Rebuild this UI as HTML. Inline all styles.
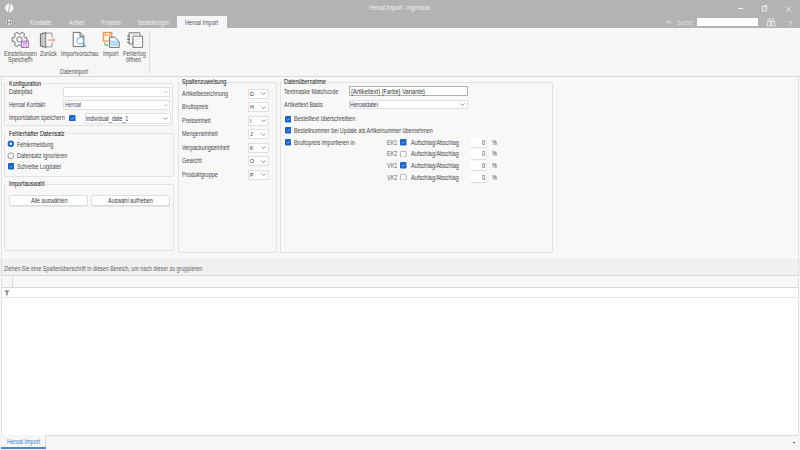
<!DOCTYPE html>
<html><head><meta charset="utf-8"><style>
html,body{margin:0;padding:0;}
body{width:800px;height:450px;overflow:hidden;position:relative;background:#f8f8f8;font-family:"Liberation Sans",sans-serif;}
body>div,body>svg{position:absolute;}
.t{white-space:nowrap;transform-origin:0 0;-webkit-text-stroke:0px currentColor;}
</style></head><body>
<div style="left:0px;top:0px;width:800px;height:28px;background:#b3b3b3"></div>
<svg style="left:4px;top:3.4px" width="11" height="11" viewBox="0 0 11 11"><circle cx="5.2" cy="5" r="4.2" fill="#f4f4f4"/><path d="M6 1 L4.4 9" stroke="#b3b3b3" stroke-width="1.1"/></svg>
<div class="t" style="left:369px;top:5.00px;color:#f2f2f2;font-size:6.3px;line-height:6.3px;transform:scaleX(0.865);">Heroal Import - ingenious</div>
<div style="left:738px;top:8px;width:5px;height:1px;background:#f2f2f2"></div>
<svg style="left:761px;top:4px" width="8" height="8" viewBox="0 0 8 8"><rect x="1.5" y="2.5" width="3.6" height="4.6" fill="none" stroke="#f0f0f0" stroke-width="0.95"/><path d="M3 1.5 H5.9 V6" fill="none" stroke="#e6e6e6" stroke-width="0.7"/></svg>
<svg style="left:785px;top:6px" width="7" height="6" viewBox="0 0 7 6"><path d="M1 0.5 L6 5.5 M6 0.5 L1 5.5" stroke="#f2f2f2" stroke-width="0.9"/></svg>
<svg style="left:5px;top:18px" width="12" height="9" viewBox="0 0 12 9"><rect x="0.9" y="1.2" width="6.6" height="6.4" fill="#ececec" stroke="#9a9a9a" stroke-width="0.7"/><path d="M2.6 1.8 V7 M5.8 1.8 V7 M2.6 4.4 H5.8" stroke="#6e6e6e" stroke-width="0.8"/><path d="M9.3 4.6 L9.9 5.1 L10.5 4.6" stroke="#8a8a8a" stroke-width="0.5" fill="none"/></svg>
<div class="t" style="left:30px;top:20.00px;color:#f0f0f0;font-size:6.3px;line-height:6.3px;transform:scaleX(0.865);">Kontakte</div>
<div class="t" style="left:68.5px;top:20.00px;color:#f0f0f0;font-size:6.3px;line-height:6.3px;transform:scaleX(0.865);">Artikel</div>
<div class="t" style="left:101px;top:20.00px;color:#f0f0f0;font-size:6.3px;line-height:6.3px;transform:scaleX(0.865);">Projekte</div>
<div class="t" style="left:137.5px;top:20.00px;color:#f0f0f0;font-size:6.3px;line-height:6.3px;transform:scaleX(0.865);">Bestellungen</div>
<div style="left:177px;top:16px;width:50px;height:12px;background:#f6f6f6"></div>
<div class="t" style="left:185px;top:20.00px;color:#4d526a;font-size:6.3px;line-height:6.3px;transform:scaleX(0.865);">Heroal Import</div>
<svg style="left:665px;top:20px" width="7" height="4" viewBox="0 0 7 4"><path d="M1 3.3 L3.5 1 L6 3.3" stroke="#f2f2f2" stroke-width="1" fill="none"/></svg>
<div class="t" style="left:677px;top:20.00px;color:#e2e2e2;font-size:6.3px;line-height:6.3px;transform:scaleX(0.865);">Suche:</div>
<div style="left:697px;top:17.5px;width:61px;height:8.5px;background:#ffffff"></div>
<svg style="left:766px;top:17px" width="10" height="10" viewBox="0 0 10 10"><path d="M2.6 1.5 H4 V4.6 M6 4.6 V1.5 H7.4" stroke="#eeeeee" stroke-width="0.8" fill="none"/><path d="M1.6 4.4 L2.6 1.8 M8.4 4.4 L7.4 1.8" stroke="#e4e4e4" stroke-width="0.7"/><rect x="1.3" y="4.6" width="3.2" height="4.3" fill="none" stroke="#eeeeee" stroke-width="0.8"/><rect x="5.5" y="4.6" width="3.2" height="4.3" fill="none" stroke="#eeeeee" stroke-width="0.8"/><path d="M4.5 5.2 H5.5" stroke="#eeeeee" stroke-width="0.8"/></svg>
<div class="t" style="left:788.2px;top:20.00px;color:#f2f2f2;font-size:8px;line-height:8px;transform:scaleX(0.9);">?</div>
<div style="left:0px;top:28px;width:800px;height:48px;background:#f6f6f6"></div>
<div style="left:0px;top:76px;width:800px;height:1px;background:#d9d9d9"></div>
<div style="left:149px;top:30px;width:1px;height:43px;background:#dedede"></div>
<div class="t" style="left:3.5px;top:51.00px;color:#525252;font-size:6.3px;line-height:6.3px;transform:scaleX(0.865);">Einstellungen</div>
<div class="t" style="left:7.5px;top:57.00px;color:#525252;font-size:6.3px;line-height:6.3px;transform:scaleX(0.865);">Speichern</div>
<div class="t" style="left:40px;top:51.00px;color:#525252;font-size:6.3px;line-height:6.3px;transform:scaleX(0.865);">Zurück</div>
<div class="t" style="left:60.5px;top:51.00px;color:#525252;font-size:6.3px;line-height:6.3px;transform:scaleX(0.865);">Importvorschau</div>
<div class="t" style="left:103px;top:51.00px;color:#525252;font-size:6.3px;line-height:6.3px;transform:scaleX(0.865);">Import</div>
<div class="t" style="left:123px;top:51.00px;color:#525252;font-size:6.3px;line-height:6.3px;transform:scaleX(0.865);">Fehlerlog</div>
<div class="t" style="left:126px;top:57.00px;color:#525252;font-size:6.3px;line-height:6.3px;transform:scaleX(0.865);">öffnen</div>
<div class="t" style="left:60px;top:69.00px;color:#525252;font-size:6.3px;line-height:6.3px;transform:scaleX(0.865);">Dateninport</div>
<svg style="left:10.5px;top:31px" width="20" height="18" viewBox="0 0 20 18"><path d="M13.79 10.32 L15.91 10.21 L15.91 6.79 L13.79 6.68 L12.73 4.83 L13.68 2.94 L10.72 1.23 L9.57 3.00 L7.43 3.00 L6.28 1.23 L3.32 2.94 L4.27 4.83 L3.21 6.68 L1.09 6.79 L1.09 10.21 L3.21 10.32 L4.27 12.17 L3.32 14.06 L6.28 15.77 L7.43 14.00 L9.57 14.00 L10.72 15.77 L13.68 14.06 L12.73 12.17 Z" fill="#f7f7f7" stroke="#5c5c5c" stroke-width="0.85" stroke-linejoin="round"/><circle cx="8.5" cy="8.5" r="2.7" fill="none" stroke="#5c5c5c" stroke-width="0.85"/><rect x="10.4" y="10.2" width="7" height="6.3" fill="#ffffff" stroke="#a65cbf" stroke-width="0.9"/><rect x="11.2" y="11.4" width="5.4" height="1.3" fill="#b77ccb"/><path d="M12.2 14 V16.2 M15.6 14 V16.2 M12.2 14 H15.6" stroke="#a65cbf" stroke-width="0.7" fill="none"/></svg>
<svg style="left:39px;top:31px" width="18" height="18" viewBox="0 0 18 18"><path d="M1.4 3 L7 1.6 L7 16.4 L1.4 15 Z" fill="#c8c8c8" stroke="#5a5a5a" stroke-width="0.9" stroke-linejoin="round"/><path d="M7 2.2 H12.8 V6.5 M12.8 11.5 V15.8 H7" fill="#ffffff" stroke="#5a5a5a" stroke-width="0.9"/><rect x="7.4" y="2.6" width="5" height="12.8" fill="#ffffff"/><path d="M8.8 9 H15.5 M13.5 7 L15.6 9 L13.5 11" stroke="#ef6b6b" stroke-width="0.9" fill="none"/></svg>
<svg style="left:72px;top:31px" width="16" height="18" viewBox="0 0 16 18"><path d="M1.2 1.4 H8 L11.8 5.2 V15.6 H1.2 Z" fill="#ffffff" stroke="#5a5a5a" stroke-width="0.9" stroke-linejoin="round"/><path d="M8 1.4 V5.2 H11.8" fill="#e0e0e0" stroke="#5a5a5a" stroke-width="0.9"/><circle cx="8.3" cy="9.7" r="3.4" fill="#ffffff" stroke="#4aa3df" stroke-width="0.9"/><path d="M10.7 12.2 L14 15.6" stroke="#4aa3df" stroke-width="1.1"/></svg>
<svg style="left:102px;top:31px" width="20" height="18" viewBox="0 0 20 18"><rect x="1.2" y="1.4" width="8.6" height="8.6" fill="#fbe3cf" stroke="#ec8a3c" stroke-width="1"/><rect x="3.2" y="1.4" width="4.6" height="2.6" fill="#ffffff" stroke="#ec8a3c" stroke-width="0.8"/><rect x="3.6" y="5.6" width="3.8" height="3.2" fill="#ffffff"/><path d="M7.6 6.2 H12.6 L17.2 10.6 V16.4 H7.6 Z" fill="#ffffff" stroke="#5a5a5a" stroke-width="0.9" stroke-linejoin="round"/><rect x="8.6" y="9.6" width="7.6" height="5.2" fill="#a8d4f2"/><path d="M9.6 12 H15.2" stroke="#ffffff" stroke-width="0.5"/><path d="M2.8 11 V14.2 H5.4" stroke="#5cc26a" stroke-width="0.9" fill="none"/><path d="M5 13 L6.4 14.2 L5 15.4 Z" fill="#3eb150"/></svg>
<svg style="left:126px;top:31px" width="18" height="18" viewBox="0 0 18 18"><path d="M3 1.8 H14 V13 H3 Z" fill="#ffffff" stroke="#6a6a6a" stroke-width="0.9"/><path d="M4.8 3.5 H12" stroke="#c8c8c8" stroke-width="0.6"/><rect x="1.2" y="4.6" width="2.6" height="1.3" fill="#777"/><rect x="1.2" y="7.7" width="2.6" height="1.3" fill="#666"/><rect x="1.2" y="10.8" width="2.6" height="1.3" fill="#888"/><path d="M7 5.2 H16.6 V16.4 H7 Z" fill="#ffffff" stroke="#6a6a6a" stroke-width="0.9"/><path d="M9.2 8 H15 M9.2 10.6 H15 M9.2 13.2 H15" stroke="#c8c8c8" stroke-width="0.6"/><rect x="5.8" y="8" width="1.6" height="1.3" fill="#999"/><rect x="5.8" y="10.8" width="1.6" height="1.3" fill="#888"/></svg>
<div style="left:4px;top:83px;width:169px;height:43.3px;border:1px solid #e2e2e2;box-sizing:border-box;border-radius:1px"></div>
<div style="left:7.0px;top:82px;width:35.5px;height:3px;background:#f8f8f8"></div>
<div class="t" style="left:8.5px;top:81.00px;color:#202020;font-size:6.3px;line-height:6.3px;transform:scaleX(0.865);-webkit-text-stroke:0.05px #202020;">Konfiguration</div>
<div class="t" style="left:8.5px;top:89.00px;color:#454545;font-size:6.3px;line-height:6.3px;transform:scaleX(0.865);">Dateipfad</div>
<div style="left:63px;top:87px;width:107px;height:10px;background:#ffffff;border:1px solid #e0e0e0;box-sizing:border-box"></div>
<svg style="left:163.50px;top:90.80px" width="4" height="2.4" viewBox="0 0 4 2.4"><path d="M0.4 0.5 L2 1.9 L3.6 0.5" stroke="#bdbdbd" stroke-width="0.9" fill="none"/></svg>
<div class="t" style="left:8.5px;top:102.00px;color:#454545;font-size:6.3px;line-height:6.3px;transform:scaleX(0.865);">Heroal Kontakt</div>
<div style="left:63px;top:100px;width:107px;height:10px;background:#ffffff;border:1px solid #e0e0e0;box-sizing:border-box"></div>
<div class="t" style="left:64.6px;top:102.00px;color:#4a5068;font-size:6.3px;line-height:6.3px;transform:scaleX(0.865);">Heroal</div>
<svg style="left:163.50px;top:103.80px" width="4" height="2.4" viewBox="0 0 4 2.4"><path d="M0.4 0.5 L2 1.9 L3.6 0.5" stroke="#bdbdbd" stroke-width="0.9" fill="none"/></svg>
<div class="t" style="left:8.5px;top:115.00px;color:#454545;font-size:6.3px;line-height:6.3px;transform:scaleX(0.865);">Importdatum speichern</div>
<svg style="left:69px;top:114.5px" width="6.5" height="6.5" viewBox="0 0 7 7"><rect x="0" y="0" width="7" height="7" rx="1.3" fill="#1a63c2"/><path d="M1.8 3.6 L3 4.8 L5.3 2.2" stroke="#cfe0f5" stroke-width="0.6" fill="none"/></svg>
<div style="left:84.5px;top:113.2px;width:86px;height:10.5px;background:#ffffff;border:1px solid #e0e0e0;box-sizing:border-box"></div>
<div class="t" style="left:86.1px;top:116.00px;color:#2c3046;font-size:6.3px;line-height:6.3px;transform:scaleX(0.865);">individual_date_1</div>
<svg style="left:163.10px;top:117.05px" width="5" height="3" viewBox="0 0 5 3"><path d="M0.5 0.6 L2.5 2.4 L4.5 0.6" stroke="#555" stroke-width="0.6" fill="none"/></svg>
<div style="left:4px;top:133.3px;width:170px;height:43.5px;border:1px solid #e2e2e2;box-sizing:border-box;border-radius:1px"></div>
<div style="left:7.0px;top:132.3px;width:59px;height:3px;background:#f8f8f8"></div>
<div class="t" style="left:8.5px;top:131.00px;color:#202020;font-size:6.3px;line-height:6.3px;transform:scaleX(0.865);-webkit-text-stroke:0.05px #202020;">Fehlerhafter Datensatz</div>
<svg style="left:7px;top:140px" width="8" height="8" viewBox="0 0 8 8"><circle cx="3.8" cy="3.8" r="3.2" fill="#1a63c2"/><circle cx="3.8" cy="3.8" r="1.3" fill="#ffffff"/></svg>
<div class="t" style="left:16.5px;top:142.00px;color:#454545;font-size:6.3px;line-height:6.3px;transform:scaleX(0.865);">Fehlermeldung</div>
<svg style="left:7px;top:151.5px" width="8" height="8" viewBox="0 0 8 8"><circle cx="3.8" cy="3.8" r="2.95" fill="#fbfbfb" stroke="#858585" stroke-width="0.8"/></svg>
<div class="t" style="left:16.5px;top:153.00px;color:#454545;font-size:6.3px;line-height:6.3px;transform:scaleX(0.865);">Datensatz ignorieren</div>
<svg style="left:7.5px;top:163px" width="6.5" height="6.5" viewBox="0 0 7 7"><rect x="0" y="0" width="7" height="7" rx="1.3" fill="#1a63c2"/><path d="M1.8 3.6 L3 4.8 L5.3 2.2" stroke="#cfe0f5" stroke-width="0.6" fill="none"/></svg>
<div class="t" style="left:16.5px;top:164.00px;color:#454545;font-size:6.3px;line-height:6.3px;transform:scaleX(0.865);">Schreibe Logdatei</div>
<div style="left:4px;top:183.6px;width:170px;height:67.4px;border:1px solid #e2e2e2;box-sizing:border-box;border-radius:1px"></div>
<div style="left:7.199999999999999px;top:182.6px;width:38.3px;height:3px;background:#f8f8f8"></div>
<div class="t" style="left:8.7px;top:181.00px;color:#202020;font-size:6.3px;line-height:6.3px;transform:scaleX(0.865);-webkit-text-stroke:0.05px #202020;">Importauswahl</div>
<div style="left:9.3px;top:195px;width:78.7px;height:10.8px;background:#ffffff;border:1px solid #dcdcdc;box-sizing:border-box;border-radius:2.5px;box-shadow:0 0.5px 0 #d4d4d4"></div>
<div class="t" style="left:31px;top:198.00px;color:#383838;font-size:6.3px;line-height:6.3px;transform:scaleX(0.865);">Alle auswählen</div>
<div style="left:91px;top:195px;width:79px;height:10.8px;background:#ffffff;border:1px solid #dcdcdc;box-sizing:border-box;border-radius:2.5px;box-shadow:0 0.5px 0 #d4d4d4"></div>
<div class="t" style="left:107.5px;top:198.00px;color:#383838;font-size:6.3px;line-height:6.3px;transform:scaleX(0.865);">Auswahl aufheben</div>
<div style="left:178.3px;top:82.2px;width:98.5px;height:170.6px;border:1px solid #e2e2e2;box-sizing:border-box;border-radius:1px"></div>
<div style="left:180.3px;top:81.2px;width:45px;height:3px;background:#f8f8f8"></div>
<div class="t" style="left:181.8px;top:79.00px;color:#202020;font-size:6.3px;line-height:6.3px;transform:scaleX(0.865);-webkit-text-stroke:0.05px #202020;">Spaltenzuweisung</div>
<div class="t" style="left:182px;top:91.00px;color:#454545;font-size:6.3px;line-height:6.3px;transform:scaleX(0.865);">Artikelbezeichnung</div>
<div style="left:248px;top:88.5px;width:20.5px;height:10.2px;background:#ffffff;border:1px solid #e0e0e0;box-sizing:border-box"></div>
<div class="t" style="left:249.6px;top:91.00px;color:#2c3046;font-size:6.2px;line-height:6.2px;transform:scaleX(0.865);">D</div>
<svg style="left:261.10px;top:92.20px" width="5" height="3" viewBox="0 0 5 3"><path d="M0.5 0.6 L2.5 2.4 L4.5 0.6" stroke="#555" stroke-width="0.6" fill="none"/></svg>
<div class="t" style="left:182px;top:104.00px;color:#454545;font-size:6.3px;line-height:6.3px;transform:scaleX(0.865);">Bruttopreis</div>
<div style="left:248px;top:102.0px;width:20.5px;height:10.2px;background:#ffffff;border:1px solid #e0e0e0;box-sizing:border-box"></div>
<div class="t" style="left:249.6px;top:104.00px;color:#2c3046;font-size:6.2px;line-height:6.2px;transform:scaleX(0.865);">H</div>
<svg style="left:261.10px;top:105.70px" width="5" height="3" viewBox="0 0 5 3"><path d="M0.5 0.6 L2.5 2.4 L4.5 0.6" stroke="#555" stroke-width="0.6" fill="none"/></svg>
<div class="t" style="left:182px;top:118.00px;color:#454545;font-size:6.3px;line-height:6.3px;transform:scaleX(0.865);">Preiseinheit</div>
<div style="left:248px;top:115.5px;width:20.5px;height:10.2px;background:#ffffff;border:1px solid #e0e0e0;box-sizing:border-box"></div>
<div class="t" style="left:249.6px;top:118.00px;color:#2c3046;font-size:6.2px;line-height:6.2px;transform:scaleX(0.865);">I</div>
<svg style="left:261.10px;top:119.20px" width="5" height="3" viewBox="0 0 5 3"><path d="M0.5 0.6 L2.5 2.4 L4.5 0.6" stroke="#555" stroke-width="0.6" fill="none"/></svg>
<div class="t" style="left:182px;top:131.00px;color:#454545;font-size:6.3px;line-height:6.3px;transform:scaleX(0.865);">Mengeneinheit</div>
<div style="left:248px;top:129.0px;width:20.5px;height:10.2px;background:#ffffff;border:1px solid #e0e0e0;box-sizing:border-box"></div>
<div class="t" style="left:249.6px;top:131.00px;color:#2c3046;font-size:6.2px;line-height:6.2px;transform:scaleX(0.865);">J</div>
<svg style="left:261.10px;top:132.70px" width="5" height="3" viewBox="0 0 5 3"><path d="M0.5 0.6 L2.5 2.4 L4.5 0.6" stroke="#555" stroke-width="0.6" fill="none"/></svg>
<div class="t" style="left:182px;top:145.00px;color:#454545;font-size:6.3px;line-height:6.3px;transform:scaleX(0.865);">Verpackungseinheit</div>
<div style="left:248px;top:142.5px;width:20.5px;height:10.2px;background:#ffffff;border:1px solid #e0e0e0;box-sizing:border-box"></div>
<div class="t" style="left:249.6px;top:145.00px;color:#2c3046;font-size:6.2px;line-height:6.2px;transform:scaleX(0.865);">K</div>
<svg style="left:261.10px;top:146.20px" width="5" height="3" viewBox="0 0 5 3"><path d="M0.5 0.6 L2.5 2.4 L4.5 0.6" stroke="#555" stroke-width="0.6" fill="none"/></svg>
<div class="t" style="left:182px;top:158.00px;color:#454545;font-size:6.3px;line-height:6.3px;transform:scaleX(0.865);">Gewicht</div>
<div style="left:248px;top:156.0px;width:20.5px;height:10.2px;background:#ffffff;border:1px solid #e0e0e0;box-sizing:border-box"></div>
<div class="t" style="left:249.6px;top:158.00px;color:#2c3046;font-size:6.2px;line-height:6.2px;transform:scaleX(0.865);">O</div>
<svg style="left:261.10px;top:159.70px" width="5" height="3" viewBox="0 0 5 3"><path d="M0.5 0.6 L2.5 2.4 L4.5 0.6" stroke="#555" stroke-width="0.6" fill="none"/></svg>
<div class="t" style="left:182px;top:172.00px;color:#454545;font-size:6.3px;line-height:6.3px;transform:scaleX(0.865);">Produktgruppe</div>
<div style="left:248px;top:169.5px;width:20.5px;height:10.2px;background:#ffffff;border:1px solid #e0e0e0;box-sizing:border-box"></div>
<div class="t" style="left:249.6px;top:172.00px;color:#2c3046;font-size:6.2px;line-height:6.2px;transform:scaleX(0.865);">P</div>
<svg style="left:261.10px;top:173.20px" width="5" height="3" viewBox="0 0 5 3"><path d="M0.5 0.6 L2.5 2.4 L4.5 0.6" stroke="#555" stroke-width="0.6" fill="none"/></svg>
<div style="left:280px;top:82.2px;width:273.2px;height:170.6px;border:1px solid #e2e2e2;box-sizing:border-box;border-radius:1px"></div>
<div style="left:282.3px;top:81.2px;width:45px;height:3px;background:#f8f8f8"></div>
<div class="t" style="left:283.8px;top:79.00px;color:#202020;font-size:6.3px;line-height:6.3px;transform:scaleX(0.865);-webkit-text-stroke:0.05px #202020;">Datenübernahme</div>
<div class="t" style="left:284px;top:89.00px;color:#454545;font-size:6.3px;line-height:6.3px;transform:scaleX(0.865);">Textmaske Matchcode</div>
<div style="left:348.5px;top:86.3px;width:119.3px;height:10px;background:#ffffff;border:1px solid #b0b0b0;box-sizing:border-box"></div>
<div class="t" style="left:351.2px;top:89.00px;color:#333;font-size:6.3px;line-height:6.3px;transform:scaleX(0.913);">{Artikeltext} {Farbe} Variante}</div>
<div class="t" style="left:284px;top:102.00px;color:#454545;font-size:6.3px;line-height:6.3px;transform:scaleX(0.865);">Artikeltext Basis</div>
<div style="left:348.5px;top:99.8px;width:119.3px;height:9.7px;background:#ffffff;border:1px solid #e0e0e0;box-sizing:border-box"></div>
<div class="t" style="left:350.1px;top:102.00px;color:#2c3046;font-size:6.3px;line-height:6.3px;transform:scaleX(0.865);">Heroaldatei</div>
<svg style="left:460.40px;top:103.25px" width="5" height="3" viewBox="0 0 5 3"><path d="M0.5 0.6 L2.5 2.4 L4.5 0.6" stroke="#555" stroke-width="0.6" fill="none"/></svg>
<svg style="left:284.5px;top:116px" width="6.5" height="6.5" viewBox="0 0 7 7"><rect x="0" y="0" width="7" height="7" rx="1.3" fill="#1a63c2"/><path d="M1.8 3.6 L3 4.8 L5.3 2.2" stroke="#cfe0f5" stroke-width="0.6" fill="none"/></svg>
<div class="t" style="left:294px;top:116.00px;color:#454545;font-size:6.3px;line-height:6.3px;transform:scaleX(0.865);">Bestelltext überschreiben</div>
<svg style="left:284.5px;top:127.4px" width="6.5" height="6.5" viewBox="0 0 7 7"><rect x="0" y="0" width="7" height="7" rx="1.3" fill="#1a63c2"/><path d="M1.8 3.6 L3 4.8 L5.3 2.2" stroke="#cfe0f5" stroke-width="0.6" fill="none"/></svg>
<div class="t" style="left:293.8px;top:128.00px;color:#454545;font-size:6.3px;line-height:6.3px;transform:scaleX(0.85);">Bestellnummer bei Update als Artikelnummer übernehmen</div>
<svg style="left:284.5px;top:139px" width="6.5" height="6.5" viewBox="0 0 7 7"><rect x="0" y="0" width="7" height="7" rx="1.3" fill="#1a63c2"/><path d="M1.8 3.6 L3 4.8 L5.3 2.2" stroke="#cfe0f5" stroke-width="0.6" fill="none"/></svg>
<div class="t" style="left:293.8px;top:140.00px;color:#454545;font-size:6.3px;line-height:6.3px;transform:scaleX(0.865);">Bruttopreis importieren in</div>
<div class="t" style="left:386.5px;top:140.00px;color:#666666;font-size:6.3px;line-height:6.3px;transform:scaleX(0.865);">EK1</div>
<svg style="left:400px;top:139.10000000000002px" width="6.5" height="6.5" viewBox="0 0 7 7"><rect x="0" y="0" width="7" height="7" rx="1.3" fill="#1a63c2"/><path d="M1.8 3.6 L3 4.8 L5.3 2.2" stroke="#cfe0f5" stroke-width="0.6" fill="none"/></svg>
<div class="t" style="left:411px;top:140.00px;color:#454545;font-size:6.3px;line-height:6.3px;transform:scaleX(0.865);">Aufschlag/Abschlag</div>
<div style="left:471px;top:137.70000000000002px;width:15.5px;height:10.3px;background:#ffffff;border-bottom:1px solid #dddddd;border-right:1px solid #ececec;box-sizing:border-box"></div>
<div class="t" style="left:482.1px;top:140.00px;color:#333;font-size:6.3px;line-height:6.3px;transform:scaleX(0.865);">0</div>
<div class="t" style="left:492px;top:140.00px;color:#444;font-size:6.3px;line-height:6.3px;transform:scaleX(0.865);">%</div>
<div class="t" style="left:386.5px;top:151.00px;color:#666666;font-size:6.3px;line-height:6.3px;transform:scaleX(0.865);">EK2</div>
<svg style="left:400px;top:150.70000000000002px" width="6.5" height="6.5" viewBox="0 0 7 7"><rect x="0.4" y="0.4" width="6.2" height="6.2" rx="1" fill="#fbfbfb" stroke="#8a8a8a" stroke-width="0.7"/></svg>
<div class="t" style="left:411px;top:151.00px;color:#454545;font-size:6.3px;line-height:6.3px;transform:scaleX(0.865);">Aufschlag/Abschlag</div>
<div style="left:471px;top:149.3px;width:15.5px;height:10.3px;background:#ffffff;border-bottom:1px solid #dddddd;border-right:1px solid #ececec;box-sizing:border-box"></div>
<div class="t" style="left:482.1px;top:151.00px;color:#333;font-size:6.3px;line-height:6.3px;transform:scaleX(0.865);">0</div>
<div class="t" style="left:492px;top:151.00px;color:#444;font-size:6.3px;line-height:6.3px;transform:scaleX(0.865);">%</div>
<div class="t" style="left:386.5px;top:163.00px;color:#666666;font-size:6.3px;line-height:6.3px;transform:scaleX(0.865);">VK1</div>
<svg style="left:400px;top:162.3px" width="6.5" height="6.5" viewBox="0 0 7 7"><rect x="0" y="0" width="7" height="7" rx="1.3" fill="#1a63c2"/><path d="M1.8 3.6 L3 4.8 L5.3 2.2" stroke="#cfe0f5" stroke-width="0.6" fill="none"/></svg>
<div class="t" style="left:411px;top:163.00px;color:#454545;font-size:6.3px;line-height:6.3px;transform:scaleX(0.865);">Aufschlag/Abschlag</div>
<div style="left:471px;top:160.9px;width:15.5px;height:10.3px;background:#ffffff;border-bottom:1px solid #dddddd;border-right:1px solid #ececec;box-sizing:border-box"></div>
<div class="t" style="left:482.1px;top:163.00px;color:#333;font-size:6.3px;line-height:6.3px;transform:scaleX(0.865);">0</div>
<div class="t" style="left:492px;top:163.00px;color:#444;font-size:6.3px;line-height:6.3px;transform:scaleX(0.865);">%</div>
<div class="t" style="left:386.5px;top:175.00px;color:#666666;font-size:6.3px;line-height:6.3px;transform:scaleX(0.865);">VK2</div>
<svg style="left:400px;top:173.90000000000003px" width="6.5" height="6.5" viewBox="0 0 7 7"><rect x="0.4" y="0.4" width="6.2" height="6.2" rx="1" fill="#fbfbfb" stroke="#8a8a8a" stroke-width="0.7"/></svg>
<div class="t" style="left:411px;top:175.00px;color:#454545;font-size:6.3px;line-height:6.3px;transform:scaleX(0.865);">Aufschlag/Abschlag</div>
<div style="left:471px;top:172.50000000000003px;width:15.5px;height:10.3px;background:#ffffff;border-bottom:1px solid #dddddd;border-right:1px solid #ececec;box-sizing:border-box"></div>
<div class="t" style="left:482.1px;top:175.00px;color:#333;font-size:6.3px;line-height:6.3px;transform:scaleX(0.865);">0</div>
<div class="t" style="left:492px;top:175.00px;color:#444;font-size:6.3px;line-height:6.3px;transform:scaleX(0.865);">%</div>
<div style="left:0px;top:259px;width:800px;height:16px;background:#f0f0f0"></div>
<div class="t" style="left:4px;top:266.00px;color:#606060;font-size:6.3px;line-height:6.3px;transform:scaleX(0.85);">Ziehen Sie eine Spaltenüberschrift in diesen Bereich, um nach dieser zu gruppieren</div>
<div style="left:1px;top:275px;width:798px;height:1px;background:#d8d8d8"></div>
<div style="left:2px;top:276px;width:796px;height:11px;background:#f7f7f7"></div>
<div style="left:12px;top:276px;width:1px;height:21px;background:#dcdcdc"></div>
<div style="left:1px;top:287px;width:798px;height:1px;background:#d8d8d8"></div>
<div style="left:2px;top:288px;width:796px;height:9px;background:#ffffff"></div>
<svg style="left:4px;top:289.5px" width="6" height="6" viewBox="0 0 6 6"><path d="M0.2 0.5 H5.6 L3.6 2.6 V5.4 L2.2 5.4 V2.6 Z" fill="#7a7a7a"/></svg>
<div style="left:1px;top:297px;width:798px;height:1px;background:#e6e6e6"></div>
<div style="left:2px;top:298px;width:796px;height:137px;background:#ffffff"></div>
<div style="left:1px;top:435px;width:798px;height:1px;background:#d8d8d8"></div>
<div style="left:0px;top:436px;width:800px;height:14px;background:#f6f6f6"></div>
<div style="left:1px;top:435px;width:44.5px;height:13px;background:#f6f6f6;border-right:1px solid #d8d8d8;box-sizing:border-box"></div>
<div style="left:1px;top:447px;width:44.5px;height:2px;background:#4a88cc"></div>
<div class="t" style="left:7px;top:439.00px;color:#3d7cc4;font-size:6.3px;line-height:6.3px;transform:scaleX(0.865);">Heroal Import</div>
<div style="left:793px;top:442px;width:2px;height:1px;background:#555"></div>
<div style="left:1px;top:77px;width:1px;height:358px;background:#e2e2e2"></div>
<div style="left:798px;top:77px;width:1px;height:358px;background:#e2e2e2"></div>
</body></html>
